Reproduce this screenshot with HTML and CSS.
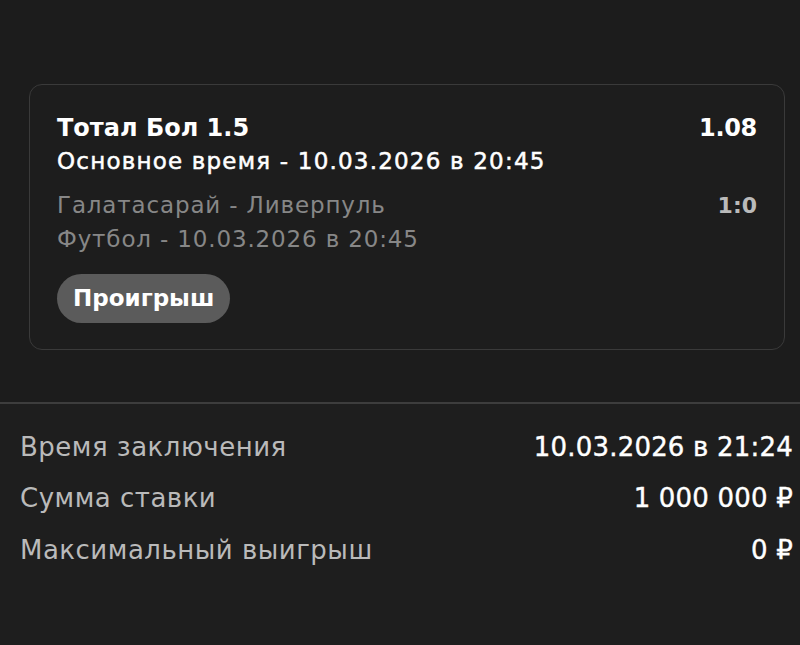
FILE: index.html
```html
<!DOCTYPE html>
<html lang="ru">
<head>
<meta charset="utf-8">
<link rel="stylesheet" href="styles.css">
</head>
<body>
<div class="page">
  <div class="card">
    <div class="row">
      <span class="title">Тотал Бол 1.5</span>
      <span class="odds">1.08</span>
    </div>
    <div class="subtitle">Основное время - 10.03.2026 в 20:45</div>
    <div class="row muted-row">
      <span class="muted">Галатасарай - Ливерпуль</span>
      <span class="score">1:0</span>
    </div>
    <div class="muted">Футбол - 10.03.2026 в 20:45</div>
    <div class="status">Проигрыш</div>
  </div>
  <div class="divider"></div>
  <div class="details">
    <div class="drow"><span class="label">Время заключения</span><span class="value">10.03.2026 в 21:24</span></div>
    <div class="drow"><span class="label">Сумма ставки</span><span class="value">1 000 000 ₽</span></div>
    <div class="drow"><span class="label">Максимальный выигрыш</span><span class="value">0 ₽</span></div>
  </div>
</div>
</body>
</html>
```
FILE: styles.css
```css
html, body {
  margin: 0;
  padding: 0;
  background: #1c1c1c;
}
body {
  font-family: "DejaVu Sans", sans-serif;
  color: #fff;
  width: 800px;
  height: 645px;
  overflow: hidden;
}
.page {
  padding-top: 84px;
}
.card {
  margin: 0 15px 0 29px;
  height: 266px;
  box-sizing: border-box;
  border: 1.5px solid #3a3a3a;
  border-radius: 13px;
  background: #1d1d1d;
  padding: 27px 27px 0 27px;
}
.row {
  display: flex;
  justify-content: space-between;
  align-items: center;
}
.title {
  font-size: 24px;
  font-weight: 700;
  line-height: 32px;
  letter-spacing: 0;
}
.odds {
  font-size: 24px;
  font-weight: 700;
  letter-spacing: -0.3px;
}
.subtitle {
  font-size: 23px;
  font-weight: 400;
  line-height: 34px;
  letter-spacing: 1.2px;
  -webkit-text-stroke: 0.5px #fff;
}
.muted-row {
  margin-top: 10px;
}
.muted {
  font-size: 23px;
  font-weight: 400;
  color: #878787;
  line-height: 34px;
  letter-spacing: 0.85px;
}
.score {
  font-size: 22px;
  font-weight: 700;
  color: #bababa;
}
.status {
  display: inline-block;
  margin-top: 18px;
  background: #5b5b5b;
  border-radius: 25px;
  height: 49px;
  line-height: 49px;
  padding: 0 16px;
  font-size: 23px;
  font-weight: 700;
  letter-spacing: 0;
}
.divider {
  margin-top: 52px;
  height: 2px;
  background: #3d3d3d;
}
.details {
  padding: 17px 7px 0 20px;
  background: #1e1e1e;
  height: 241px;
  box-sizing: border-box;
}
.drow {
  display: flex;
  justify-content: space-between;
  align-items: center;
  height: 51.5px;
}
.label {
  font-size: 26px;
  color: #bababa;
  font-weight: 400;
  letter-spacing: 0.5px;
}
.value {
  font-size: 26px;
  font-weight: 400;
  color: #fff;
  letter-spacing: 0.2px;
  -webkit-text-stroke: 0.4px #fff;
}
```
